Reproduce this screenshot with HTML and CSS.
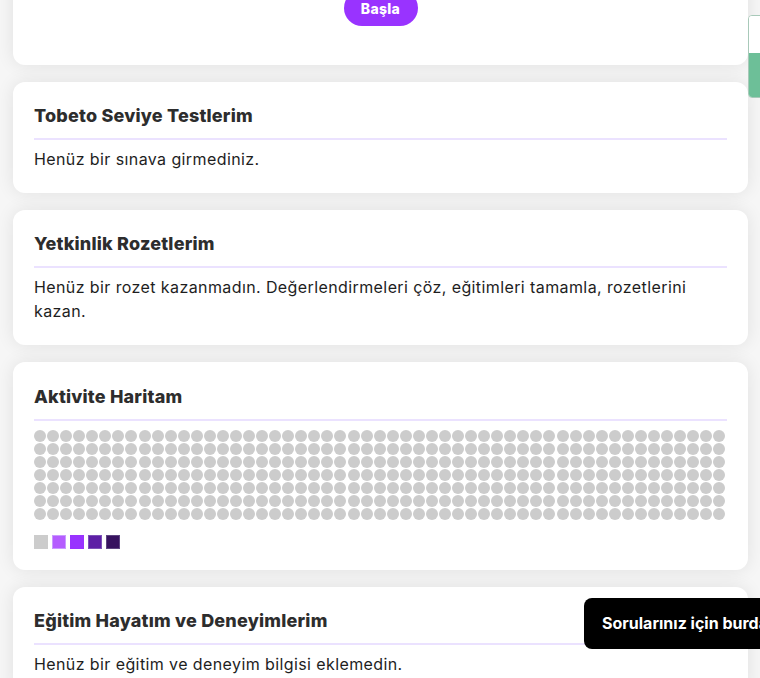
FILE: index.html
```html
<!DOCTYPE html>
<html lang="tr">
<head>
<meta charset="utf-8">
<title>Profil</title>
<link rel="stylesheet" href="styles.css">
</head>
<body>
<main class="page">
  <section class="card card-top">
    <button class="start-btn">Başla</button>
  </section>

  <section class="card">
    <h2 class="card-title">Tobeto Seviye Testlerim</h2>
    <p class="card-text">Henüz bir sınava girmediniz.</p>
  </section>

  <section class="card">
    <h2 class="card-title">Yetkinlik Rozetlerim</h2>
    <p class="card-text">Henüz bir rozet kazanmadın. Değerlendirmeleri çöz, eğitimleri tamamla, rozetlerini kazan.</p>
  </section>

  <section class="card card-map">
    <h2 class="card-title">Aktivite Haritam</h2>
    <div class="heatmap" id="heatmap"></div>
    <div class="legend">
      <span class="lv lv0"></span>
      <span class="lv lv1"></span>
      <span class="lv lv2"></span>
      <span class="lv lv3"></span>
      <span class="lv lv4"></span>
    </div>
  </section>

  <section class="card">
    <h2 class="card-title">Eğitim Hayatım ve Deneyimlerim</h2>
    <p class="card-text">Henüz bir eğitim ve deneyim bilgisi eklemedin.</p>
  </section>
</main>

<div class="side-tab"><span class="side-top"></span><span class="side-bottom"></span></div>
<div class="help-tip">Sorularınız için burda</div>

<script>
  var hm = document.getElementById('heatmap');
  var html = '';
  for (var i = 0; i < 371; i++) html += '<span class="dot"></span>';
  hm.innerHTML = html;
</script>
</body>
</html>
```

FILE: styles.css
```css
* { box-sizing: border-box; }

html, body {
  margin: 0;
  padding: 0;
  background: #f6f6f6;
  overflow: hidden;
  height: 678px;
}

body {
  font-family: "Inter", "Noto Sans", sans-serif;
  color: #222;
}

.page {
  display: flex;
  flex-direction: column;
  gap: 17px;
  padding: 0 12px 0 13px;
}

.card {
  background: #fff;
  border-radius: 12px;
  box-shadow: 0 0 18px rgba(0, 0, 0, 0.09);
  padding: 22px 21px 22px 21px;
}

.card-map {
  padding-top: 23px;
  padding-bottom: 21px;
}

.card-top {
  margin-top: -40px;
  padding: 30px 21px 39px;
  display: flex;
  justify-content: center;
}

.start-btn {
  height: 36px;
  width: 74px;
  border: none;
  border-radius: 18px;
  background: #9933ff;
  color: #fff;
  font-family: "Inter", sans-serif;
  font-weight: 800;
  font-size: 14px;
  letter-spacing: 0.3px;
  padding: 0;
}

.card-title {
  margin: 0;
  font-size: 18px;
  line-height: 24px;
  font-weight: 800;
  color: #2d2d2d;
  padding-bottom: 10px;
  border-bottom: 2px solid #ebe2ff;
  letter-spacing: 0.2px;
}

.card-text {
  margin: 7px 0 0;
  font-size: 16px;
  line-height: 24px;
  color: #1e1e1e;
  letter-spacing: 0.4px;
  padding-right: 4px;
}

.heatmap {
  margin-top: 9px;
  display: grid;
  grid-template-columns: repeat(53, 12px);
  grid-template-rows: repeat(7, 12px);
  grid-auto-flow: column;
  justify-content: space-between;
  row-gap: 1px;
  width: 692px;
}

.dot {
  width: 12px;
  height: 12px;
  border-radius: 50%;
  background: #cccccc;
}

.legend {
  display: flex;
  gap: 4px;
  margin-top: 15px;
}

.lv {
  width: 14px;
  height: 14px;
  display: block;
}
.lv0 { background: #cccccc; }
.lv1 { background: #b55dff; border: 1px solid #c99bff; }
.lv2 { background: #9933ff; }
.lv3 { background: #5d1fa5; border: 1px solid #7d52b8; }
.lv4 { background: #37125f; border: 1px solid #5e4581; }

.side-tab {
  position: fixed;
  left: 748px;
  top: 15px;
  width: 20px;
  height: 83px;
  border: 1px solid #a8c9b9;
  border-radius: 4px;
  overflow: hidden;
  display: flex;
  flex-direction: column;
  background: #fff;
}
.side-top { height: 37px; background: #fff; }
.side-bottom { flex: 1; background: #6dbf98; }

.help-tip {
  position: fixed;
  left: 584px;
  top: 598px;
  width: 200px;
  height: 51px;
  background: #000;
  color: #fff;
  border-radius: 8px;
  font-family: "Inter", "Roboto", sans-serif;
  font-weight: 700;
  font-size: 16px;
  line-height: 51px;
  padding-left: 18px;
  white-space: nowrap;
}
```
